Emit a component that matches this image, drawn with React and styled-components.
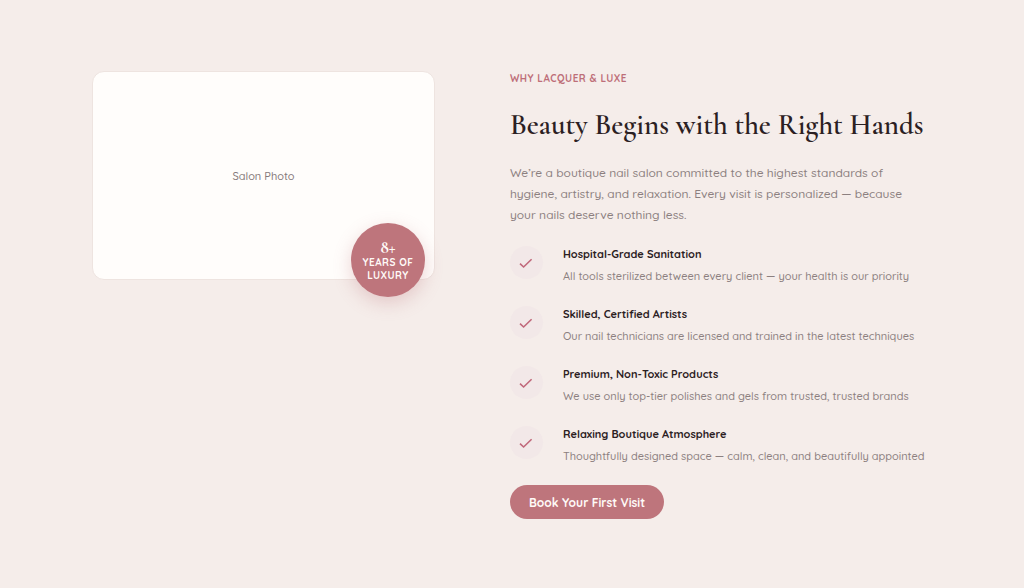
import styled, { createGlobalStyle } from "styled-components";

const GlobalStyle = createGlobalStyle`
  * {
    box-sizing: border-box;
    margin: 0;
    padding: 0;
  }

  body {
    background-color: #f5edea;
    color: #2b2022;
    font-family: Quicksand, Lato, sans-serif;
    font-weight: 500;
  }
`;

const Section = styled.section`
  padding: 71px 9%;

  @media (max-width: 760px) {
    padding: 40px 24px;
  }
`;

const Container = styled.div`
  display: grid;
  grid-template-columns: 13fr 16fr;
  align-items: start;
  gap: 75px;
  max-width: 1200px;
  margin: 0 auto;

  @media (max-width: 760px) {
    grid-template-columns: 1fr;
    gap: 48px;
  }
`;

const PhotoWrapper = styled.div`
  position: relative;
`;

const Photo = styled.div`
  display: flex;
  align-items: center;
  justify-content: center;
  aspect-ratio: 18 / 11;
  border: 1px solid #eee4e0;
  border-radius: 12px;
  background-color: #fffdfb;
  color: #85797a;
  font-size: 11px;
`;

const Badge = styled.div`
  position: absolute;
  right: 10px;
  bottom: -17px;
  display: flex;
  flex-direction: column;
  align-items: center;
  justify-content: center;
  width: 74px;
  height: 74px;
  border-radius: 50%;
  background-color: #be757c;
  box-shadow: 0 6px 18px rgba(190, 117, 124, 0.3);
  color: #fffaf7;
  font-size: 10px;
  font-weight: 700;
  letter-spacing: 0.05em;
  line-height: 13px;
  text-align: center;
  text-transform: uppercase;
`;

const BadgeNumber = styled.strong`
  font-family: "Cormorant Garamond", "Liberation Serif", serif;
  font-size: 17px;
  font-weight: 700;
  letter-spacing: normal;
  line-height: 17px;
`;

const Eyebrow = styled.p`
  color: #be6f79;
  font-size: 10px;
  font-weight: 700;
  letter-spacing: 0.05em;
  line-height: 16px;
  text-transform: uppercase;
`;

const Title = styled.h2`
  margin-top: 20px;
  font-family: "Cormorant Garamond", "Liberation Serif", serif;
  font-size: 29px;
  font-weight: 600;
  line-height: 36px;
`;

const Description = styled.p`
  max-width: 34em;
  margin-top: 19px;
  color: #8c8080;
  font-size: 12px;
  line-height: 21px;
`;

const Features = styled.ul`
  display: grid;
  gap: 22px;
  margin-top: 21px;
  list-style: none;
`;

const Feature = styled.li`
  display: flex;
  gap: 20px;
`;

const FeatureIcon = styled.span`
  display: flex;
  flex-shrink: 0;
  align-items: center;
  justify-content: center;
  width: 33px;
  height: 33px;
  border-radius: 50%;
  background-color: #f2e8e8;
  color: #c0687a;
`;

const FeatureTitle = styled.h3`
  font-size: 11px;
  font-weight: 700;
  line-height: 16px;
`;

const FeatureText = styled.p`
  margin-top: 6px;
  color: #8c8080;
  font-size: 11px;
  line-height: 16px;
`;

const BookButton = styled.button`
  margin-top: 21px;
  padding: 0 19px;
  height: 34px;
  border: none;
  border-radius: 17px;
  background-color: #be757c;
  color: #fffaf7;
  font-family: inherit;
  font-size: 12px;
  font-weight: 700;
  cursor: pointer;
`;

const features = [
  {
    title: "Hospital-Grade Sanitation",
    text: "All tools sterilized between every client — your health is our priority",
  },
  {
    title: "Skilled, Certified Artists",
    text: "Our nail technicians are licensed and trained in the latest techniques",
  },
  {
    title: "Premium, Non-Toxic Products",
    text: "We use only top-tier polishes and gels from trusted, trusted brands",
  },
  {
    title: "Relaxing Boutique Atmosphere",
    text: "Thoughtfully designed space — calm, clean, and beautifully appointed",
  },
];

function CheckIcon() {
  return (
    <svg width="14" height="12" viewBox="0 0 14 12" fill="none" aria-hidden="true">
      <path d="M1 6.6 4.6 10 12.6 2.2" stroke="currentColor" strokeWidth="1.6" />
    </svg>
  );
}

export default function App() {
  return (
    <>
      <GlobalStyle />
      <Section>
        <Container>
          <PhotoWrapper>
            <Photo>Salon Photo</Photo>
            <Badge>
              <BadgeNumber>8+</BadgeNumber>
              <span>Years of Luxury</span>
            </Badge>
          </PhotoWrapper>
          <div>
            <Eyebrow>Why Lacquer &amp; Luxe</Eyebrow>
            <Title>Beauty Begins with the Right Hands</Title>
            <Description>
              We’re a boutique nail salon committed to the highest standards of
              hygiene, artistry, and relaxation. Every visit is personalized —
              because your nails deserve nothing less.
            </Description>
            <Features>
              {features.map((feature) => (
                <Feature key={feature.title}>
                  <FeatureIcon>
                    <CheckIcon />
                  </FeatureIcon>
                  <div>
                    <FeatureTitle>{feature.title}</FeatureTitle>
                    <FeatureText>{feature.text}</FeatureText>
                  </div>
                </Feature>
              ))}
            </Features>
            <BookButton type="button">Book Your First Visit</BookButton>
          </div>
        </Container>
      </Section>
    </>
  );
}
